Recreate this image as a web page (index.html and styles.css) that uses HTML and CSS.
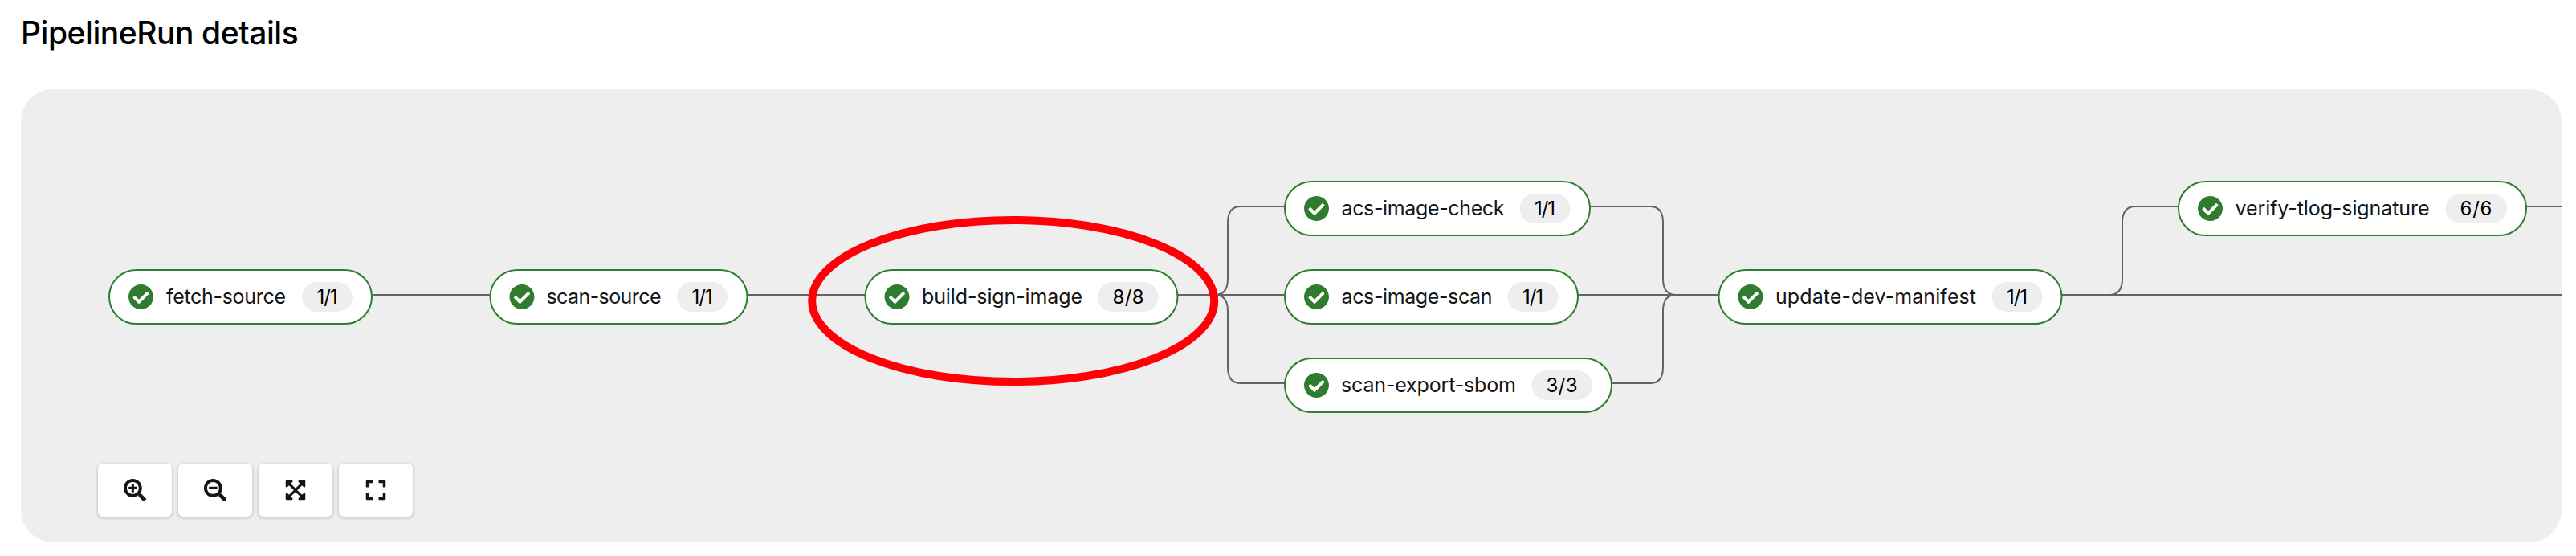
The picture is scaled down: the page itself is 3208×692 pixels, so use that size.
FILE: index.html
```html
<!DOCTYPE html>
<html lang="en">
<head>
<meta charset="utf-8">
<title>PipelineRun details</title>
<link rel="stylesheet" href="styles.css">
</head>
<body>
<main class="page">
  <h1 class="title">PipelineRun details</h1>
  <section class="panel">
    <svg class="graph" viewBox="26 111 3164 564" role="img" aria-label="Pipeline graph">
      <defs>
        <path id="check" d="M504 256c0 136.967-111.033 248-248 248S8 392.967 8 256 119.033 8 256 8s248 111.033 248 248zM227.314 387.314l184-184c6.248-6.248 6.248-16.379 0-22.627l-22.627-22.627c-6.248-6.249-16.379-6.249-22.628 0L216 308.118l-70.059-70.059c-6.248-6.248-16.379-6.248-22.628 0l-22.627 22.627c-6.248 6.248-6.248 16.379 0 22.627l104 104c6.249 6.249 16.379 6.249 22.628.001z"/>
        <g id="status"><use href="#check" transform="translate(24.5 18.5) scale(.0625)"/></g>
      </defs>
      <g class="edges">
        <path d="M464 367H610M931 367H1077M1467 367H1600M1965 367H2140M2568 367H3192M3146 257H3192"/>
        <path d="M1513 367Q1529 367 1529 347V277Q1529 257 1545 257H1600"/>
        <path d="M1513 367Q1529 367 1529 387V457Q1529 477 1545 477H1600"/>
        <path d="M1981 257H2055Q2071 257 2071 277V347Q2071 367 2087 367"/>
        <path d="M2007 477H2055Q2071 477 2071 457V387Q2071 367 2087 367"/>
        <path d="M2627 367Q2643 367 2643 347V277Q2643 257 2659 257H2713"/>
      </g>
      <g transform="translate(135 335)">
        <rect class="node" x="1" y="1" width="327" height="67" rx="33.5"/>
        <use class="ok" href="#status"/>
        <text class="name" x="72" y="43" textLength="149">fetch-source</text>
        <rect class="badge" x="241" y="16" width="63" height="37" rx="18.5"/>
        <text class="count" x="259.5" y="43" textLength="26">1/1</text>
      </g>
      <g transform="translate(609.5 335)">
        <rect class="node" x="1" y="1" width="320" height="67" rx="33.5"/>
        <use class="ok" href="#status"/>
        <text class="name" x="71" y="43" textLength="143">scan-source</text>
        <rect class="badge" x="233.5" y="16" width="63" height="37" rx="18.5"/>
        <text class="count" x="252" y="43" textLength="26">1/1</text>
      </g>
      <g transform="translate(1076.5 335)">
        <rect class="node" x="1" y="1" width="389" height="67" rx="33.5"/>
        <use class="ok" href="#status"/>
        <text class="name" x="71.5" y="43" textLength="200">build-sign-image</text>
        <rect class="badge" x="290.5" y="16" width="75.5" height="37" rx="18.5"/>
        <text class="count" x="309" y="43" textLength="39">8/8</text>
      </g>
      <g transform="translate(1599 225)">
        <rect class="node" x="1" y="1" width="380" height="67" rx="33.5"/>
        <use class="ok" href="#status"/>
        <text class="name" x="71.5" y="43" textLength="203">acs-image-check</text>
        <rect class="badge" x="293.5" y="16" width="63" height="37" rx="18.5"/>
        <text class="count" x="312" y="43" textLength="26">1/1</text>
      </g>
      <g transform="translate(1599 335)">
        <rect class="node" x="1" y="1" width="365" height="67" rx="33.5"/>
        <use class="ok" href="#status"/>
        <text class="name" x="71.5" y="43" textLength="188">acs-image-scan</text>
        <rect class="badge" x="278.5" y="16" width="63" height="37" rx="18.5"/>
        <text class="count" x="297" y="43" textLength="26">1/1</text>
      </g>
      <g transform="translate(1599 445)">
        <rect class="node" x="1" y="1" width="407" height="67" rx="33.5"/>
        <use class="ok" href="#status"/>
        <text class="name" x="71" y="43" textLength="218">scan-export-sbom</text>
        <rect class="badge" x="308.5" y="16" width="75.5" height="37" rx="18.5"/>
        <text class="count" x="326.5" y="43" textLength="39">3/3</text>
      </g>
      <g transform="translate(2139.5 335)">
        <rect class="node" x="1" y="1" width="427" height="67" rx="33.5"/>
        <use class="ok" href="#status"/>
        <text class="name" x="71.5" y="43" textLength="250">update-dev-manifest</text>
        <rect class="badge" x="341" y="16" width="63" height="37" rx="18.5"/>
        <text class="count" x="359.5" y="43" textLength="26">1/1</text>
      </g>
      <g transform="translate(2712 225)">
        <rect class="node" x="1" y="1" width="433" height="67" rx="33.5"/>
        <use class="ok" href="#status"/>
        <text class="name" x="71.5" y="43" textLength="242">verify-tlog-signature</text>
        <rect class="badge" x="333.5" y="16" width="76.5" height="37" rx="18.5"/>
        <text class="count" x="351.5" y="43" textLength="40">6/6</text>
      </g>
      <ellipse class="highlight" cx="1261.7" cy="374.5" rx="250.5" ry="100.5"/>
    </svg>
    <div class="toolbar">
      <button class="tool" aria-label="Zoom in"><svg class="icon" viewBox="0 0 512 512"><path d="M304 192v32c0 6.6-5.4 12-12 12h-56v56c0 6.6-5.4 12-12 12h-32c-6.6 0-12-5.4-12-12v-56h-56c-6.6 0-12-5.4-12-12v-32c0-6.6 5.4-12 12-12h56v-56c0-6.6 5.4-12 12-12h32c6.6 0 12 5.4 12 12v56h56c6.6 0 12 5.4 12 12zm201 284.7L476.7 505c-9.4 9.4-24.6 9.4-33.9 0L343 405.3c-4.5-4.5-7-10.6-7-17V372c-35.3 27.6-79.7 44-128 44C93.1 416 0 322.9 0 208S93.1 0 208 0s208 93.1 208 208c0 48.3-16.4 92.7-44 128h16.3c6.4 0 12.5 2.5 17 7l99.7 99.7c9.3 9.4 9.3 24.6 0 34zM344 208c0-75.2-60.8-136-136-136S72 132.8 72 208s60.8 136 136 136 136-60.8 136-136z"/></svg></button>
      <button class="tool" aria-label="Zoom out"><svg class="icon" viewBox="0 0 512 512"><path d="M304 192v32c0 6.6-5.4 12-12 12H124c-6.6 0-12-5.4-12-12v-32c0-6.6 5.4-12 12-12h168c6.6 0 12 5.4 12 12zm201 284.7L476.7 505c-9.4 9.4-24.6 9.4-33.9 0L343 405.3c-4.5-4.5-7-10.6-7-17V372c-35.3 27.6-79.7 44-128 44C93.1 416 0 322.9 0 208S93.1 0 208 0s208 93.1 208 208c0 48.3-16.4 92.7-44 128h16.3c6.4 0 12.5 2.5 17 7l99.7 99.7c9.3 9.4 9.3 24.6 0 34zM344 208c0-75.2-60.8-136-136-136S72 132.8 72 208s60.8 136 136 136 136-60.8 136-136z"/></svg></button>
      <button class="tool" aria-label="Fit to screen"><svg class="icon" viewBox="-32 0 512 512"><path d="M448 344v112a23.94 23.94 0 0 1-24 24H312c-21.39 0-32.09-25.9-17-41l36.2-36.2L224 295.6 116.77 402.9 153 439c15.09 15.1 4.39 41-17 41H24a23.94 23.94 0 0 1-24-24V344c0-21.4 25.89-32.1 41-17l36.19 36.2L184.46 256 77.18 148.7 41 185c-15.1 15.1-41 4.4-41-17V56a23.94 23.94 0 0 1 24-24h112c21.39 0 32.09 25.9 17 41l-36.2 36.2L224 216.4l107.23-107.3L295 73c-15.09-15.1-4.39-41 17-41h112a23.94 23.94 0 0 1 24 24v112c0 21.4-25.89 32.1-41 17l-36.19-36.2L263.54 256l107.28 107.3L407 327.1c15.1-15.2 41-4.5 41 16.9z"/></svg></button>
      <button class="tool" aria-label="Reset view"><svg class="icon" viewBox="-32 0 512 512"><path d="M0 180V56c0-13.3 10.7-24 24-24h124c6.6 0 12 5.4 12 12v40c0 6.6-5.4 12-12 12H64v84c0 6.6-5.4 12-12 12H12c-6.6 0-12-5.4-12-12zM288 44v40c0 6.6 5.4 12 12 12h84v84c0 6.6 5.4 12 12 12h40c6.6 0 12-5.4 12-12V56c0-13.3-10.7-24-24-24H300c-6.6 0-12 5.4-12 12zm148 276h-40c-6.6 0-12 5.4-12 12v84h-84c-6.6 0-12 5.4-12 12v40c0 6.6 5.4 12 12 12h124c13.3 0 24-10.7 24-24V332c0-6.6-5.4-12-12-12zM160 468v-40c0-6.6-5.4-12-12-12H64v-84c0-6.6-5.4-12-12-12H12c-6.6 0-12 5.4-12 12v124c0 13.3 10.7 24 24 24h124c6.6 0 12-5.4 12-12z"/></svg></button>
    </div>
  </section>
</main>
</body>
</html>
```

FILE: styles.css
```css
* { box-sizing: border-box; }

body {
  margin: 0;
  background: #fff;
  color: #151515;
  font-family: Inter, "Liberation Sans", sans-serif;
}

.page {
  display: flex;
  flex-direction: column;
  gap: 45px;
  height: 692px;
  padding: 16px 18px 17px 26px;
}

.title {
  margin: 0;
  height: 50px;
  color: #000;
  font-size: 39px;
  font-weight: 500;
  line-height: 50px;
  letter-spacing: -0.45px;
  white-space: nowrap;
}

.panel {
  position: relative;
  flex: 1;
  overflow: hidden;
  border-radius: 40px;
  background: #eee;
}

.graph {
  display: block;
  width: 3164px;
  height: 564px;
}

.edges { fill: none; stroke: #60646a; stroke-width: 2; }
.node { fill: #fff; stroke: #2f7d2f; stroke-width: 2; }
.ok { fill: #307c2f; }
.badge { fill: #eee; }
.name { fill: #151515; font-size: 25px; }
.count { fill: #000; font-size: 24px; }
.highlight { fill: none; stroke: #ff0008; stroke-width: 10; }

/* Floating view controls over the graph */
.toolbar {
  position: absolute;
  left: 96px;
  bottom: 32px;
  display: flex;
  gap: 8px;
}

.tool {
  display: flex;
  align-items: center;
  justify-content: center;
  width: 92px;
  height: 66px;
  padding: 0;
  border: 0;
  border-radius: 6px;
  background: #fff;
  box-shadow: 0 2px 4px rgba(0, 0, 0, .16), 0 0 4px rgba(0, 0, 0, .08);
}

.icon {
  width: 28px;
  height: 28px;
  fill: #151515;
}
```
